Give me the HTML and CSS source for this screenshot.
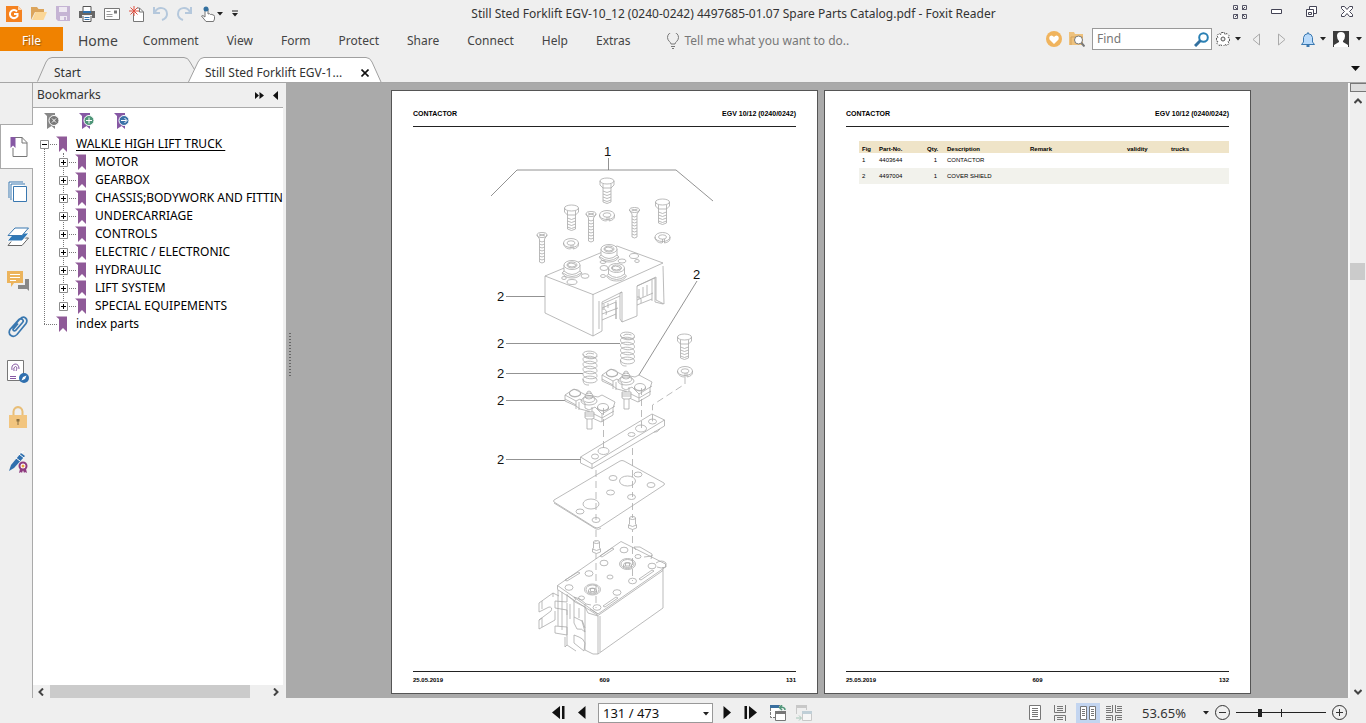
FILE: index.html
```html
<!DOCTYPE html>
<html lang="en">
<head>
<meta charset="utf-8">
<title>Still Sted Forklift EGV-10_12 (0240-0242) 4497685-01.07 Spare Parts Catalog.pdf - Foxit Reader</title>
<link rel="stylesheet" href="styles.css">
</head>
<body>
<svg class="defs" aria-hidden="true">
  <defs>
    <symbol id="mark" viewBox="0 0 12 16"><path d="M0 .5h11V16l-4-4-4 4V3z" fill="currentColor"/></symbol>
    <symbol id="plus" viewBox="0 0 9 9"><path d="M.5.5h8v8h-8z" fill="#fff" stroke="#8c8c8c"/><path d="M2 4.500h5M4.500 2v5" stroke="#000"/></symbol>
    <symbol id="minus" viewBox="0 0 9 9"><path d="M.5.5h8v8h-8z" fill="#fff" stroke="#8c8c8c"/><path d="M2 4.500h5" stroke="#000"/></symbol>
    <symbol id="caret" viewBox="0 0 6 4"><path d="M0 0h6L3 3.500z" fill="#222"/></symbol>
    <g id="bolt"><path d="M-7-1v4l3 3h8l3-3v-4M-4 2v4M4 2v4"/><ellipse cy="-1" rx="7" ry="3"/><path d="M-4 6v14q4 3 8 0V6M-4 9q4 3 8 0M-4 12q4 3 8 0M-4 15q4 3 8 0M-4 18q4 3 8 0"/></g>
    <g id="washer"><ellipse rx="7.500" ry="4.500"/><ellipse rx="4" ry="2.200"/><path d="M-7.500 0v1.500q2 4.500 7 4.500M2 6q5.500-1 5.500-4.500V0M0 2v4M2 2v4"/></g>
    <g id="screw"><ellipse rx="5" ry="2.500"/><path d="M-3-1 3 1M3-1-3 1M-5 0l2.500 4M5 0 2.500 4M-2.500 4v23q2.500 2 5 0V4M-2.500 6q2.500 2 5 0M-2.500 9q2.500 2 5 0M-2.500 12q2.500 2 5 0M-2.500 15q2.500 2 5 0M-2.500 18q2.500 2 5 0M-2.500 21q2.500 2 5 0M-2.500 24q2.500 2 5 0"/></g>
    <g id="spring"><path d="M7 4C6-1-7-1-7 3s14 6 14 1M-4 4q1-3 8-1M-7 3c0 6 14 6 14 2M-7 8c0 6 14 6 14 2M-7 13c0 6 14 6 14 2M-7 18c0 6 14 6 14 2M-7 23c0 6 14 6 14 2M-7 28c0 5 14 5 14 1M-7 8c0-4 14-4 14 2M-7 13c0-4 14-4 14 2M-7 18c0-4 14-4 14 2M-7 23c0-4 14-4 14 2M-7 28c0-4 14-4 14 1M-7 28c0 6 3 6 6 6"/></g>
    <g id="bridge"><path fill="#fff" d="M-24-3-15-9l12 6 7 1 5 1 4-2 13 7-2 6v7l-12 7-13-6v-5l-8-2-4-3-11-5z"/><path d="M-24-3l11 6 4-2 5 4 0 5 4 2 6-3 7 7 13-8M-24 1l11 6M-13 3v8M13 16v8M-1 13l14 7 12-7M-10 4v8M3 9v9"/><ellipse cx="-14" cy="-5" rx="5.500" ry="3.500"/><path d="M-19.500-5v2q5 4 11 0v-2"/><ellipse cx="14" cy="9" rx="5.500" ry="3.500"/><path d="M8.500 9v2q5 4 11 0V9"/><ellipse cx="0" cy="3" rx="8" ry="4"/><ellipse cx="0" cy="1" rx="6" ry="3.500"/><ellipse cx="0" cy="-2" rx="4" ry="3"/><path d="M-2-4v-2l2-1 2 1v2"/><path fill="#fff" d="M-4 14v6l2 1v10h5V21l2-1v-6zM-4 16h9M-4 18h9M-2 21h5"/></g>
    <g id="socket"><path fill="#fff" d="M-8-3v6l-2 2q3 5 10 5t10-5L8 3v-6"/><ellipse cy="-3" rx="8" ry="4.500" fill="#fff"/><ellipse cy="-3" rx="5" ry="3"/><path d="M-8 3q8 7 16 0M-9 5q9 7 18 0M-4-4l3-1 4 1 1 2-4 1-4-1z"/></g>
    <g id="plug"><path fill="#fff" d="M-3-4v6l-1 1v3q4 3 8 0V3L3 2v-6"/><ellipse cy="-4" rx="3" ry="1.500"/><path d="M-4 3q4 3 8 0"/></g>
    <g id="well"><ellipse rx="8" ry="5.500"/><ellipse rx="6.500" ry="4.500"/><ellipse cy="1" rx="4" ry="2.500"/><path d="M-4 1v2M4 1v2M-2-1h4v3h-4z"/></g>
  </defs>
</svg>

<div class="app">
  <header class="titlebar">
    <div class="quick">
      <button aria-label="Foxit"><svg width="16" height="16" viewBox="0 0 16 16"><path d="M0 0h12l4 4v12H0z" fill="#f58220"/><path d="M12 0v4h4" fill="#fcd5b0"/><path d="M11 5.500A4 4 0 1 0 11.500 10V8H8" fill="none" stroke="#fff" stroke-width="2"/></svg></button>
      <button aria-label="Open"><svg width="16" height="16" viewBox="0 0 16 16"><path d="M0 14V1h6l1.500 2H13v3H4z" fill="#dca55c"/><path d="M1 14 4.500 6H16l-3.500 8z" fill="#fbd798"/></svg></button>
      <button aria-label="Save"><svg width="14" height="15" viewBox="0 0 14 15"><path d="M0 0h14v15H2l-2-2z" fill="#c5b4d4"/><path d="M3 1h8v5H3zM4 10h7v4H4z" fill="#eee9f2"/><path d="M8 11h2v3H8z" fill="#c5b4d4"/></svg></button>
      <button aria-label="Print"><svg width="16" height="16" viewBox="0 0 16 16"><path d="M4 5V.5h8V5M4 10v5.500h8V10" fill="#fff" stroke="#555"/><path d="M0 5h16v7h-3V9H3v3H0z" fill="#666"/><path d="M4 5h8v2H4z" fill="#2f72ae"/><path d="M5.500 11.500h5M5.500 13.500h5" stroke="#2f72ae"/></svg></button>
      <button aria-label="E-mail"><svg width="16" height="12" viewBox="0 0 16 12"><path d="M.5.5h15v11H.5z" fill="#fff" stroke="#777"/><path d="M2.500 3.500h4M2.500 6.500h6M2.500 8.500h6" stroke="#999"/><path d="M10 2.500h3v3h-3z" fill="#777"/></svg></button>
      <button aria-label="New"><svg width="15" height="16" viewBox="0 0 15 16"><path d="M4.500 7v8.500h10V6l-4-4H8" fill="#fff" stroke="#777"/><path d="M10.500 2v4h4" fill="none" stroke="#777"/><path d="M5 0v10M0 5h10M1.500 1.500l7 7M8.500 1.500l-7 7" stroke="#e05040"/></svg></button>
      <button aria-label="Undo"><svg width="15" height="15" viewBox="0 0 15 15"><path d="M2 6C5 0 14 1 14 8c0 3-2 5-5 6M1 1v6h6" fill="none" stroke="#b5c8dc" stroke-width="2"/></svg></button>
      <button aria-label="Redo"><svg width="15" height="15" viewBox="1 0 15 15"><path d="M14 6C11 0 2 1 2 8c0 3 2 5 5 6M15 1v6H9" fill="none" stroke="#b5c8dc" stroke-width="2"/></svg></button>
      <button class="hand" aria-label="Hand tool"><svg width="14" height="16" viewBox="0 0 14 16"><path d="M4 11V3q1.500-2 3 0v5q1.500-1 2.500.5Q11 8 12 9q1.500 0 1.500 1.500V13l-1 2.500H5L.5 10q1-1.500 3.500 1z" fill="#fff" stroke="#777"/><circle cx="5" cy="3" r="2.500" fill="#33709f"/></svg><svg width="6" height="4"><use href="#caret"/></svg></button>
      <button aria-label="Customize"><svg width="6" height="7" viewBox="0 0 6 7"><path d="M0 1h6" stroke="#222"/><path d="M0 3h6L3 6.500z" fill="#222"/></svg></button>
    </div>
    <h1 class="title">Still Sted Forklift EGV-10_12 (0240-0242) 4497685-01.07 Spare Parts Catalog.pdf - Foxit Reader</h1>
    <div class="winctl">
      <button aria-label="Full screen"><svg width="14" height="14" viewBox="0 0 14 14" fill="none" stroke="#556"><path d="M.5 4.500v-4h4v4zM9.500.5h4v4h-4zM.5 9.500h4v4h-4zM9.500 9.500h4v4h-4zM2 2l3 3M12 2 9 5M2 12l3-3M12 12 9 9"/></svg></button>
      <button aria-label="Minimize"><svg width="11" height="5" viewBox="0 0 11 5"><path d="M.5.5h10v4H.5z" fill="#fff" stroke="#445"/></svg></button>
      <button aria-label="Restore"><svg width="11" height="11" viewBox="0 0 11 11" fill="#fff" stroke="#445"><path d="M3.500.5h7v7h-7z"/><path d="M.5 3.500h7v7h-7z"/><path d="M2.500 6.500h3v2h-3z"/></svg></button>
      <button aria-label="Close"><svg width="12" height="11" viewBox="0 0 12 11"><path d="M.5.500h3L6 3.500 8.500.5h3v2L8.500 5.500l3 3v2h-3L6 7.500l-2.500 3h-3v-2l3-3-3-3z" fill="#fff" stroke="#445"/></svg></button>
    </div>
  </header>

  <nav class="menubar">
    <button class="file">File</button>
    <div class="menus">
      <button class="home">Home</button><button>Comment</button><button>View</button><button>Form</button><button>Protect</button><button>Share</button><button>Connect</button><button>Help</button><button>Extras</button>
    </div>
    <button class="tell"><svg width="12" height="16" viewBox="0 0 12 16" fill="none" stroke="#777"><path d="M4 11c0-2-3.500-3-3.500-6.500a5 5 0 0 1 11 0C11.500 8 8 9 8 11zM4 13.500h4M5 15.500h2"/></svg>Tell me what you want to do..</button>
    <div class="tools">
      <button aria-label="Favourite"><svg width="16" height="16" viewBox="0 0 16 16"><circle cx="8" cy="8" r="8" fill="#f0b45e"/><path d="M8 13 3.500 8.500Q2.500 5 5.500 4.500 7 4.500 8 6q1-1.500 2.500-1.500 3 .5 2 4z" fill="#fff"/></svg></button>
      <button aria-label="Find in folder"><svg width="16" height="16" viewBox="0 0 16 16"><path d="M0 14V1h5l1 2h8v11z" fill="#eec27e"/><path d="M2 14V6h12" fill="none" stroke="#d5a35b"/><circle cx="9.500" cy="9" r="4" fill="#fff" stroke="#777"/><path d="m12.500 12 3 3.500" stroke="#777" stroke-width="2"/></svg></button>
      <label class="find"><input type="text" placeholder="Find" aria-label="Find"><svg width="15" height="15" viewBox="0 0 15 15"><circle cx="9.500" cy="5.500" r="4.300" fill="none" stroke="#2a80b4" stroke-width="2"/><path d="M6.500 8.500 1 14" stroke="#33709f" stroke-width="3"/></svg></label>
      <button class="pair" aria-label="Settings"><svg width="14" height="14" viewBox="0 0 14 14"><path d="M5.500.5h3l.5 2 2-1 2 2-1 2 1.500.500v3l-1.500.5 1 2-2 2-2-1-.5 1.500h-3L5 12.500l-2 1-2-2 1-2L.5 9V6L2 5.500l-1-2 2-2 2 1z" fill="#fff" stroke="#555" stroke-dasharray="2 1"/><circle cx="7" cy="7" r="2" fill="#efefef" stroke="#555"/></svg><svg width="6" height="4"><use href="#caret"/></svg></button>
      <button class="nav first" aria-label="Previous"><svg width="8" height="13" viewBox="0 0 8 13"><path d="M7.500 1v11L1 6.500z" fill="none" stroke="#aaa"/></svg></button>
      <button class="nav" aria-label="Next"><svg width="8" height="13" viewBox="0 0 8 13"><path d="M.5 1v11L7 6.500z" fill="none" stroke="#aaa"/></svg></button>
      <button class="pair" aria-label="Notifications"><svg width="14" height="15" viewBox="0 0 14 15"><path d="M.5 12.500 2.500 10V5.500Q3 2 7 1.500q4 .5 4.500 4V10l2 2.500z" fill="#b9dafa" stroke="#3a78b0"/><path d="M5.500 13h3v2h-3zM6.500 0h1v2h-1z" fill="#3a78b0"/></svg><svg width="6" height="4"><use href="#caret"/></svg></button>
      <button class="pair user" aria-label="Account"><svg width="16" height="16" viewBox="0 0 16 16"><path d="M0 0h16v16H0z" fill="#3c3c3c"/><path d="M4 5q0-4 4-4t4 4q0 3-2 5v1l5 3v2H1v-2l5-3v-1Q4 8 4 5z" fill="#fff"/></svg><svg width="6" height="4"><use href="#caret"/></svg></button>
    </div>
  </nav>

  <div class="tabs">
    <button class="tab start"><svg viewBox="0 0 160 25" width="160" height="25" aria-hidden="true"><path d="M.5 24.500 9 5Q11 .5 15 .5H147Q151 .5 153 5L159.500 16" fill="#efefef" stroke="#a0a0a0"/></svg><span>Start</span></button>
    <div class="tab active"><svg viewBox="0 0 194 25" width="194" height="25" aria-hidden="true"><path d="M.5 25 10 5Q12 .5 16 .5H178Q182 .5 184 5L193 25" fill="#fff" stroke="#a0a0a0"/></svg><span>Still Sted Forklift EGV-1...</span><button aria-label="Close tab"><svg width="8" height="8" viewBox="0 0 8 8"><path d="m.5.500 7 7M7.500.500l-7 7" stroke="#111" stroke-width="1.600"/></svg></button></div>
    <button class="more" aria-label="Tab list"><svg width="9" height="5" viewBox="0 0 9 5"><path d="M0 0h9L4.500 5z" fill="#111"/></svg></button>
  </div>

  <div class="main">
    <nav class="rail">
      <button class="on" aria-label="Bookmarks"><svg width="18" height="22" viewBox="0 0 18 22"><path d="M3 12v8.500h14V6.500l-5-5H5" fill="none" stroke="#777"/><path d="M12 1v6h5" fill="none" stroke="#777"/><path d="M0 1h5.500v11L3 9.500.500 12V1z" fill="#8658a4"/></svg></button>
      <button aria-label="Pages"><svg width="20" height="22" viewBox="0 0 20 22" fill="#fff" stroke="#3a78b0"><path d="M1 17V1h14"/><path d="M3 19V3h14"/><path d="M5.500 5.500h13v15h-13z"/></svg></button>
      <button aria-label="Layers"><svg width="22" height="20" viewBox="0 0 22 20"><path d="M1 18.500h14L21.500 11H7z" fill="#fff" stroke="#666"/><path d="M0 14h15l7-8H7z" fill="#2f78b7" stroke="#fff"/><path d="M1 8.500h14L21.500 1H8z" fill="#fff" stroke="#3a78b0"/></svg></button>
      <button aria-label="Comments"><svg width="22" height="21" viewBox="0 0 22 21"><path d="M14 8h8v12l-2-2h-9v-4h7V8z" fill="#888"/><path d="M0 0h16v12H7l-3 4v-4H0z" fill="#ecb45c"/><path d="M3 3.500h10M3 6.500h10M3 9.500h6" stroke="#fff"/></svg></button>
      <button aria-label="Attachments"><svg width="20" height="22" viewBox="0 0 20 22"><path d="m4 12 8-9q3-3 5.500-1t.5 5.500l-9 11q-3 3-6 1t-1-6l9-10q2-1.500 3.500 0t0 3l-7 8q-2 1-2.500-1l5-6" fill="none" stroke="#3a78b0" stroke-width="1.700"/></svg></button>
      <button aria-label="Signatures"><svg width="22" height="23" viewBox="0 0 22 23"><path d="M.5.500h16v20H.5z" fill="#fff" stroke="#777"/><path d="M5 10q-1-5 3-6 4 0 4 5M7 11q-1-4 1.500-4.500Q11 7 9 11M3 16.500h6M3 18.500h6" fill="none" stroke="#8658a4"/><circle cx="17" cy="18" r="5" fill="#2f6fae"/><path d="m14.500 20.500 1.500-3.500 3.500-1.500-1.500 3.500z" fill="#fff"/></svg></button>
      <button aria-label="Security"><svg width="18" height="22" viewBox="0 0 18 22"><path d="M4.500 10V5.500q.5-4 4.500-4.500 4 .5 4.500 4.500V10" fill="none" stroke="#e8be78" stroke-width="2"/><path d="M0 9h18v13H0z" fill="#f2c57f"/><path d="M7.500 13h3v2.500h-1V19h-1v-3.500h-1z" fill="#8b7041"/></svg></button>
      <button aria-label="Sign"><svg width="20" height="22" viewBox="0 0 20 22"><path d="m1 20 2-6L13 2l4 3L6 17z" fill="#2f6fae"/><path d="m11 3 5 4M8 7l4 3M13 2l3-2" stroke="#fff"/><circle cx="15" cy="15" r="3.500" fill="#fff" stroke="#8e3b7f" stroke-width="2"/><circle cx="15" cy="15" r="1.500" fill="#e8a33d"/><path d="m12 18-1 4 2-1 1 1 1-3 1 3 1-1 2 1-1-4z" fill="#8e3b7f"/></svg></button>
    </nav>

    <aside class="panel">
      <div class="panel-head"><h2>Bookmarks</h2><button aria-label="Expand"><svg width="9" height="7" viewBox="0 0 9 7"><path d="M0 0l4 3.500L0 7zM4.500 0 9 3.500 4.500 7z" fill="#111"/></svg></button><button aria-label="Collapse"><svg width="5" height="9" viewBox="0 0 5 9"><path d="M5 0v9L0 4.500z" fill="#111"/></svg></button></div>
      <div class="panel-body">
        <div class="panel-tools">
          <button aria-label="Delete bookmark"><svg width="16" height="17" viewBox="0 0 16 17"><path d="M0 0h11v16l-3.500-3L3 16V3z" fill="#888"/><circle cx="10" cy="7.500" r="5" fill="#777" stroke="#fff"/><path d="m8 5.500 4 4M12 5.500l-4 4" stroke="#fff"/></svg></button>
          <button aria-label="Add bookmark"><svg width="16" height="17" viewBox="0 0 16 17"><path d="M0 0h11v16l-3.500-3L3 16V3z" fill="#8658a4"/><circle cx="10" cy="7.500" r="5" fill="#4f9679" stroke="#fff"/><path d="M7 7.500h6M10 4.500v6" stroke="#fff"/></svg></button>
          <button aria-label="Go to bookmark"><svg width="16" height="17" viewBox="0 0 16 17"><path d="M0 0h11v16l-3.500-3L3 16V3z" fill="#8658a4"/><circle cx="10" cy="7.500" r="5" fill="#3b72a8" stroke="#fff"/><path d="M7 7.500h5.500M10.500 5l2.500 2.500-2.500 2.500" fill="none" stroke="#fff"/></svg></button>
        </div>
        <ul class="tree">
          <li><div class="row"><svg class="box"><use href="#minus"/></svg><svg class="bm"><use href="#mark"/></svg><a class="current" href="#p1">WALKLE HIGH LIFT TRUCK&nbsp;</a></div>
            <ul>
              <li class="row"><svg class="box"><use href="#plus"/></svg><svg class="bm"><use href="#mark"/></svg><a href="#p1">MOTOR</a></li>
              <li class="row"><svg class="box"><use href="#plus"/></svg><svg class="bm"><use href="#mark"/></svg><a href="#p1">GEARBOX</a></li>
              <li class="row"><svg class="box"><use href="#plus"/></svg><svg class="bm"><use href="#mark"/></svg><a href="#p1">CHASSIS;BODYWORK AND FITTIN</a></li>
              <li class="row"><svg class="box"><use href="#plus"/></svg><svg class="bm"><use href="#mark"/></svg><a href="#p1">UNDERCARRIAGE</a></li>
              <li class="row"><svg class="box"><use href="#plus"/></svg><svg class="bm"><use href="#mark"/></svg><a href="#p1">CONTROLS</a></li>
              <li class="row"><svg class="box"><use href="#plus"/></svg><svg class="bm"><use href="#mark"/></svg><a href="#p1">ELECTRIC / ELECTRONIC</a></li>
              <li class="row"><svg class="box"><use href="#plus"/></svg><svg class="bm"><use href="#mark"/></svg><a href="#p1">HYDRAULIC</a></li>
              <li class="row"><svg class="box"><use href="#plus"/></svg><svg class="bm"><use href="#mark"/></svg><a href="#p1">LIFT SYSTEM</a></li>
              <li class="row"><svg class="box"><use href="#plus"/></svg><svg class="bm"><use href="#mark"/></svg><a href="#p1">SPECIAL EQUIPEMENTS</a></li>
            </ul>
          </li>
          <li class="row leaf"><span class="box"></span><svg class="bm"><use href="#mark"/></svg><a href="#p2">index parts</a></li>
        </ul>
      </div>
      <div class="hscroll"><button aria-label="Scroll left"><svg width="6" height="8" viewBox="0 0 6 8"><path d="M5 .5 1.500 4 5 7.500" fill="none" stroke="#444" stroke-width="2"/></svg></button><div class="track"><div class="thumb"></div></div><button aria-label="Scroll right"><svg width="6" height="8" viewBox="0 0 6 8"><path d="M1 .5 4.500 4 1 7.500" fill="none" stroke="#444" stroke-width="2"/></svg></button></div>
    </aside>
    <div class="splitter"><i></i></div>

    <main class="doc">
      <section class="page" id="p1">
        <header class="page-head"><span>CONTACTOR</span><span>EGV 10/12 (0240/0242)</span></header>
        <svg class="drawing" viewBox="413 128 383 542" role="img" aria-label="Exploded view of contactor">
          <g fill="none" stroke="#777" stroke-width=".8">
            <path d="M491 196l26-26h159l37 31M608.500 158v12M506 296.500h39M506 343.500h114M506 373.500h77M506 400.500h59M506 459.500h75M697 281l-63 102"/>
          </g>
          <g fill="none" stroke="#aaa" stroke-width=".8">
            <use href="#bolt" x="607" y="182"/><use href="#bolt" x="571.500" y="209"/><use href="#bolt" x="662.500" y="203"/><use href="#bolt" x="684.500" y="338"/>
            <use href="#washer" x="607" y="215"/><use href="#washer" x="571" y="243"/><use href="#washer" x="662.500" y="237"/><use href="#washer" x="685" y="371"/>
            <use href="#screw" x="542" y="235"/><use href="#screw" x="591" y="214"/><use href="#screw" x="634.500" y="210"/>
            <path d="M545 276l72-30 46 17-70 31.500zM545 276v37l48 23v-42M593 336l9-5v-29l20-10v30l15-6v-30l19-9v23l8 4-1-38M622 292l-2 1v26l2 3M599 301v28M602 304l18-8M602 308l14-6v17M604 304v5M608 303v5M602 314l16-6M602 320l14-6M616 300v19M637 286l18-8M655 278v24l8 2M639 289v10M643 287v10M647 285v10M637 300l16-7M652 280v21M637 305l15-6M637 297q5-1 4 6M602 309q6 0 4 6"/>
            <use href="#socket" x="572" y="268"/><use href="#socket" x="609" y="252"/><use href="#socket" x="616.500" y="271"/>
            <ellipse cx="634" cy="256" rx="4.500" ry="2.500"/><ellipse cx="622" cy="261" rx="4" ry="2"/><ellipse cx="604" cy="268" rx="4" ry="2.500"/><ellipse cx="585" cy="276" rx="4" ry="2.300"/><ellipse cx="572" cy="282" rx="5" ry="2.500"/><ellipse cx="637" cy="261" rx="2.300" ry="1.500"/><ellipse cx="564" cy="278" rx="2.300" ry="1.500"/><ellipse cx="603" cy="276" rx="2.500" ry="1.500"/><ellipse cx="603" cy="262" rx="3" ry="1.500"/>
            <use href="#spring" x="627.500" y="332"/><use href="#spring" x="590" y="351"/>
            <use href="#bridge" x="626" y="378"/><use href="#bridge" x="589" y="398"/>
            <path d="M580.500 457 652 414l12.500 6L592 464zM580.500 457v6l11.500 5.500V464M592 468.500l72.500-42.500v-6M654 432q3 1 6-3"/>
            <ellipse cx="595" cy="456.500" rx="3.500" ry="2.500"/><ellipse cx="603.500" cy="451" rx="5.500" ry="3.500"/><ellipse cx="631.500" cy="434.500" rx="3.500" ry="2"/><ellipse cx="641" cy="428.500" rx="5.500" ry="3.500"/><ellipse cx="652.500" cy="421.500" rx="4" ry="2.500"/>
            <path stroke-dasharray="7 4" d="M603.500 408v44M641.500 388v41M685 377v7l-32.500 21v17M596 470v50M596 530v78M632.500 448v49M632.500 503v78"/>
            <path d="M554 500l66-39q2-1 4 0l40 22q1 1 0 2l-64 42q-3 2-6 0l-40-25q-1-1 0-2zM554 503l42 26q3 1 5-1"/>
            <ellipse cx="627.500" cy="481" rx="8" ry="5"/><ellipse cx="591" cy="504" rx="8" ry="5"/><g><ellipse cx="613" cy="478" rx="4" ry="2.500"/><ellipse cx="638" cy="474.500" rx="4" ry="2.500"/><ellipse cx="651" cy="485" rx="4" ry="2.500"/><ellipse cx="610.500" cy="492.500" rx="4" ry="2.500"/><ellipse cx="631.500" cy="497" rx="4" ry="2.500"/><ellipse cx="580" cy="511.500" rx="4" ry="2.500"/><ellipse cx="596" cy="520" rx="4" ry="2.500"/></g>
            <use href="#plug" x="632.500" y="522"/><use href="#plug" x="596.500" y="546"/>
            <path d="M557.500 585.500 621 541.500l44.500 22.500v3L598 614zM557.500 585.500v4l40.500 26 65-45M598 616v38l65-46v-41M600 616v36"/>
            <use href="#well" x="627.500" y="564"/><use href="#well" x="592.500" y="589.500"/>
            <g><ellipse cx="624" cy="550" rx="4" ry="2.800"/><ellipse cx="604" cy="563" rx="4" ry="2.800"/><ellipse cx="589" cy="573.500" rx="4" ry="2.800"/><ellipse cx="569" cy="587.500" rx="4" ry="2.800"/><ellipse cx="652" cy="566" rx="4" ry="2.800"/><ellipse cx="632.500" cy="581" rx="4" ry="2.800"/><ellipse cx="617" cy="592.500" rx="4" ry="2.800"/><ellipse cx="597" cy="607.500" rx="4" ry="2.800"/><ellipse cx="638" cy="556.500" rx="3" ry="2"/><ellipse cx="610" cy="577" rx="3" ry="2"/><ellipse cx="581.500" cy="598" rx="3" ry="2"/></g>
            <path d="M565 580l13-8 2 1-13 8zM600 556l12-8 2 1-12 8zM639 579l13-9 2 1-13 9zM603 606l13-9 2 1-13 9zM644 557l8-1v-2l-12-7h-6l2 3M652 555l-1 4M656 563q6-4 10 0v4q-5 2-9 0"/>
            <path d="M539 603l14-10 6 3M539 603v9l10-5q4 0 2 4l-12 9v9l16-9v-9M542 601v8M542 618v9M553 593v4M539 620l3-2M558 590v36M562 592v38M567 594v8l-12-1v7l12 2v5M555 626v7l12 2v-8l-12-1M567 603v42l9 6M567 645l-2 2v-10M574 600v17l8 4 3 11q-3-4-8-3l-3-6v-6M574 635v8l10 8 1-8q-2-5-6-6l-5-2M576 600l-2-3 6 2 6 5 5 1M585 604v46l8 4 5 0M582 620l3 8M567 595l8 7 10 5 3 6 10 3M579 608v10M570 604v15M590 609l8 5"/>
          </g>
          <g class="callouts"><text x="604" y="156">1</text><text x="693" y="279">2</text><text x="497" y="301">2</text><text x="497" y="348">2</text><text x="497" y="378">2</text><text x="497" y="405">2</text><text x="497" y="464">2</text></g>
        </svg>
        <footer class="page-foot"><span>25.05.2019</span><span>609</span><span>131</span></footer>
      </section>
      <section class="page" id="p2">
        <header class="page-head"><span>CONTACTOR</span><span>EGV 10/12 (0240/0242)</span></header>
        <div class="sheet">
          <table>
            <colgroup><col class="c-fig"><col class="c-part"><col class="c-qty"><col class="c-desc"><col class="c-rem"><col class="c-val"><col></colgroup>
            <thead><tr><th>Fig</th><th>Part-No.</th><th>Qty.</th><th>Description</th><th>Remark</th><th>validity</th><th>trucks</th></tr></thead>
            <tbody><tr><td>1</td><td>4403644</td><td class="q">1</td><td>CONTACTOR</td><td></td><td></td><td></td></tr>
            <tr class="alt"><td>2</td><td>4497004</td><td class="q">1</td><td>COVER SHIELD</td><td></td><td></td><td></td></tr></tbody>
          </table>
        </div>
        <footer class="page-foot"><span>25.05.2019</span><span>609</span><span>132</span></footer>
      </section>
    </main>
    <div class="vscroll"><div class="split-box"></div><button aria-label="Scroll up"><svg width="8" height="6" viewBox="0 0 8 6"><path d="M.5 5 4 1.500 7.500 5" fill="none" stroke="#444" stroke-width="2"/></svg></button><div class="track"><div class="thumb"></div></div><button aria-label="Scroll down"><svg width="8" height="6" viewBox="0 0 8 6"><path d="M.5 1 4 4.500 7.500 1" fill="none" stroke="#444" stroke-width="2"/></svg></button></div>
  </div>

  <footer class="status">
    <div class="pager">
      <button aria-label="First page"><svg width="13" height="13" viewBox="0 0 13 13" fill="#111"><path d="M8 0v13L0 6.500zM10 0h2.500v13H10z"/></svg></button>
      <button aria-label="Previous page"><svg width="8" height="13" viewBox="0 0 8 13"><path d="M7.500 0v13L0 6.500z" fill="#111"/></svg></button>
      <div class="pick"><select aria-label="Page"><option>131 / 473</option></select><svg width="6" height="4"><use href="#caret"/></svg></div>
      <button aria-label="Next page"><svg width="8" height="13" viewBox="0 0 8 13"><path d="M.5 0v13L8 6.500z" fill="#111"/></svg></button>
      <button aria-label="Last page"><svg width="13" height="13" viewBox="0 0 13 13" fill="#111"><path d="M.5 0H3v13H.5zM5 0v13l8-6.500z"/></svg></button>
      <button aria-label="Previous view"><svg width="17" height="16" viewBox="0 0 17 16"><path d="M6 12.500H.5V.5H10" fill="#fff" stroke="#777" stroke-dasharray="3 1"/><path d="M0 0h9v3H0z" fill="#3a6f9f"/><path d="M5.500 6.500h10v9h-10z" fill="#fff" stroke="#777"/><path d="M5 6h11v3H5z" fill="#777"/><path d="M15 5q0-3-5-3M12 0 9.500 2.500 12 5" fill="none" stroke="#4f9679" stroke-width="1.500"/></svg></button>
      <button class="dim" aria-label="Next view"><svg width="17" height="16" viewBox="0 0 17 16"><path d="M.5 9V.5h10V5" fill="none" stroke="#999"/><path d="M0 0h11v3H0z" fill="#999"/><path d="M6.500 6.500h9v9h-9z" fill="#fff" stroke="#999"/><path d="M6 6h10v3H6z" fill="#8ab"/><path d="M0 13h5M3 10.500 5.500 13 3 15.500" fill="none" stroke="#4f9679"/></svg></button>
    </div>
    <div class="view">
      <button class="single" aria-label="Single page"><svg width="12" height="15" viewBox="0 0 12 15" fill="#fff" stroke="#777"><path d="M.5.500h11v14H.5zM3 3.500h6M3 5.500h6M3 7.500h6M3 9.500h6M3 11.500h6"/></svg></button>
      <button class="cont" aria-label="Continuous"><svg width="12" height="16" viewBox="0 0 12 16" fill="none" stroke="#777"><path d="M.5 0v7.500h11V0M.5 16v-5.500h11V16M3 1.500h6M3 3.500h6M3 5.500h6M3 12.500h6M3 14.500h6"/></svg></button>
      <button class="sel" aria-label="Facing"><svg width="16" height="14" viewBox="0 0 16 14" fill="#fff" stroke="#777"><path d="M.5.500h6v13h-6zM9.500.500h6v13h-6zM2 3.500h3M2 5.500h3M2 7.500h3M2 9.500h3M11 3.500h3M11 5.500h3M11 7.500h3M11 9.500h3"/></svg></button>
      <button aria-label="Continuous facing"><svg width="16" height="16" viewBox="0 0 16 16" fill="none" stroke="#777"><path d="M6.500 0v7.500H0M9.500 0v7.500H16M0 10.500h6.500V16M16 10.500H9.500V16M0 1.500h5M0 3.500h5M0 5.500h5M11 1.500h5M11 3.500h5M11 5.500h5M0 12.500h5M0 14.500h5M11 12.500h5M11 14.500h5"/></svg></button>
      <button class="zoom">53.65%<svg width="6" height="4"><use href="#caret"/></svg></button>
      <button aria-label="Zoom out"><svg width="15" height="15" viewBox="0 0 15 15" fill="none" stroke="#333"><circle cx="7.500" cy="7.500" r="7"/><path d="M4 7.500h7"/></svg></button>
      <input type="range" min="0" max="100" value="25" aria-label="Zoom">
      <button aria-label="Zoom in"><svg width="15" height="15" viewBox="0 0 15 15" fill="none" stroke="#333"><circle cx="7.500" cy="7.500" r="7"/><path d="M4 7.500h7M7.500 4v7"/></svg></button>
    </div>
  </footer>
</div>
</body>
</html>
```
FILE: styles.css
```css
* { box-sizing: border-box; }
body { margin: 0; background: #efefef; color: #444; font: 12px/16px "Noto Sans", "Open Sans", sans-serif; }
button { appearance: none; border: 0; padding: 0; margin: 0; background: none; color: inherit; font: inherit; display: flex; align-items: center; justify-content: center; white-space: nowrap; }
svg { display: block; flex: none; }
h1, h2 { margin: 0; font: inherit; }
ul { list-style: none; margin: 0; padding: 0; }
.defs { position: absolute; width: 0; height: 0; }
.app { display: flex; flex-direction: column; height: 100vh; overflow: hidden; }

.titlebar { display: grid; grid-template-columns: 1fr auto 1fr; align-items: center; height: 27px; flex: none; padding: 0 13px 0 6px; }
.quick { display: flex; align-items: center; gap: 9px; }
.quick .hand { gap: 2px; }
.title { color: #333; white-space: nowrap; padding-left: 108px; font-size: 12px; }
.winctl { display: flex; align-items: center; justify-content: flex-end; gap: 24px; margin-top: -4px; }

.menubar { display: flex; align-items: center; height: 24px; flex: none; padding-right: 4px; }
.file { width: 63px; height: 24px; padding-top: 4px; background: #f08200; color: #fff; text-shadow: 1px 1px 1px #9a5a10; }
.menus { display: flex; align-items: center; gap: 28px; margin: 4px 0 0 15px; }
.menus .home { font-size: 14px; margin-right: -3px; }
.tell { gap: 6px; margin: 4px 0 0 36px; color: #777; }
.tools { display: flex; align-items: center; gap: 7px; margin-left: auto; }
.find { display: flex; align-items: center; width: 120px; height: 22px; border: 1px solid #999; background: #fff; padding: 0 2px 0 4px; margin-right: -3px; }
.find input { flex: 1; min-width: 0; border: 0; outline: 0; padding: 0; background: none; color: #666; font: inherit; }
.find input::placeholder { color: #777; opacity: 1; }
.pair { gap: 5px; }
.nav { margin: 0 8px 0 5px; }
.nav.first { margin: 0 6px 0 4px; }
.user { gap: 7px; }

.tabs { display: flex; align-items: flex-end; height: 32px; flex: none; padding: 0 6px 0 37px; border-bottom: 1px solid #a6a6a6; }
.tab { position: relative; display: flex; align-items: center; height: 25px; color: #333; }
.tab > svg { position: absolute; left: 0; top: 0; }
.tab > span { position: relative; padding-top: 6px; }
.start { width: 151px; justify-content: flex-start; padding-left: 17px; }
.active { width: 194px; padding-left: 17px; margin-bottom: -1px; height: 26px; }
.active > button { position: relative; margin: 6px 0 0 19px; }
.more { margin: 0 0 11px auto; }

.main { display: flex; flex: 1; min-height: 0; }
.rail { width: 33px; flex: none; display: flex; flex-direction: column; padding-top: 41px; border-right: 1px solid #aaa; }
.rail button { height: 45px; width: 33px; padding-left: 3px; }
.rail .on { background: #fff; border: 1px solid #aaa; border-right: 0; }
.panel { width: 253px; flex: none; display: flex; flex-direction: column; }
.panel-head { display: flex; align-items: center; gap: 9px; height: 24px; padding: 0 8px 0 4px; color: #333; }
.panel-head h2 { flex: 1; }
.panel-body { flex: 1; min-height: 0; background: #fff; border-top: 1px solid #aaa; margin-right: 3px; overflow: hidden; color: #000; }
.panel-tools { display: flex; align-items: flex-start; gap: 19px; padding: 5px 0 0 11px; height: 27px; }
.tree a { color: inherit; text-decoration: none; white-space: nowrap; }
.tree .current { text-decoration: underline; text-underline-offset: 2px; }
.tree { padding-left: 7px; position: relative; }
.tree ul { padding-left: 19px; position: relative; }
.tree > li:first-child::before { content: ""; position: absolute; left: 11px; top: 14px; height: 175px; border-left: 1px dotted #777; }
.tree ul::before { content: ""; position: absolute; left: 23px; top: 0; height: 154px; border-left: 1px dotted #777; }
.row { display: flex; align-items: center; height: 18px; position: relative; }
.row::before { content: ""; position: absolute; left: 4px; width: 13px; border-top: 1px dotted #777; }
.box { width: 9px; height: 9px; margin-right: 7px; position: relative; flex: none; }
.bm { width: 12px; height: 16px; margin-right: 8px; color: #8f5a98; }
.hscroll { display: flex; align-items: center; height: 13px; padding: 0 7px 0 5px; }
.hscroll .track { flex: 1; margin: 0 23px 0 6px; }
.hscroll .thumb { height: 13px; background: #cbcbcb; }
.splitter { width: 8px; flex: none; background: #aaa; display: flex; align-items: center; padding: 0 3px 73px; }
.splitter i { width: 4px; height: 44px; background: radial-gradient(circle, #666 30%, transparent 40%) 0 0 / 2px 3px; }
.doc { flex: 1; min-width: 0; background: #aaa; display: flex; justify-content: center; gap: 6px; padding: 7px 0 4px; }
.page { height: 100%; aspect-ratio: 427 / 604; background: #fff; border: 1px solid #555; display: flex; flex-direction: column; padding: 0 21px; color: #000; font: bold 7px/9px "Liberation Sans", Arial, sans-serif; }
.page-head { display: flex; justify-content: space-between; align-items: center; height: 36px; padding-top: 9px; border-bottom: 1px solid #222; flex: none; }
.drawing { flex: 1; min-height: 0; width: 100%; }
.callouts { font: 13px "Liberation Sans", Arial, sans-serif; fill: #111; }
.page-foot { display: grid; grid-template-columns: 1fr auto 1fr; height: 22px; padding-top: 4px; border-top: 1px solid #222; font-size: 6px; flex: none; }
.page-foot span:last-child { text-align: right; }
.sheet { flex: 1; padding: 14px 0 0 13px; font-weight: normal; font-size: 6px; }
table { width: 100%; border-collapse: collapse; table-layout: fixed; line-height: 8px; }
th, td { padding: 0 0 0 3px; text-align: left; vertical-align: middle; }
th { background: #efe4c8; height: 12px; padding-top: 4px; }
td { height: 15px; padding-bottom: 2px; }
.alt td { background: #f2f2ec; height: 16px; padding-bottom: 0; }
td.q { text-align: center; }
.c-fig { width: 17px; } .c-part { width: 48px; } .c-qty { width: 20px; } .c-desc { width: 83px; } .c-rem { width: 97px; } .c-val { width: 44px; }
.vscroll { width: 18px; flex: none; display: flex; flex-direction: column; align-items: center; border-left: 2px solid #f8f8f8; padding-bottom: 3px; }
.split-box { width: 17px; height: 9px; border: 1px solid #777; background: #ddd; margin-bottom: 6px; }
.vscroll .track { flex: 1; width: 100%; display: flex; flex-direction: column; padding-right: 1px; }
.vscroll .track::before { content: ""; flex: 159; }
.vscroll .track::after { content: ""; flex: 408; }
.vscroll .thumb { height: 17px; background: #cbcbcb; }

.status { display: flex; align-items: center; height: 25px; flex: none; padding: 4px 19px 0 552px; }
.pager, .view { display: flex; align-items: center; }
.pager { gap: 13px; }
.pick { display: flex; align-items: center; position: relative; margin: 0 -3px 0 -1px; }
.pick select { appearance: none; width: 115px; height: 20px; border: 1px solid #999; border-radius: 0; background: #fff; color: #111; font: 13px/16px "Noto Sans", sans-serif; padding: 0 4px; }
.pick svg { position: absolute; right: 4px; top: 9px; }
.dim { opacity: .45; margin-left: -4px; }
.view { margin-left: auto; gap: 6px; }
.single { margin-right: 7px; }
.cont { margin-right: 4px; }
.sel { background: #c3d5f0; width: 24px; height: 20px; }
.zoom { font-size: 13px; gap: 17px; margin-left: 14px; color: #333; }
.view input { appearance: none; width: 90px; height: 15px; margin: 0; background: linear-gradient(#222, #222) 0 7px / 100% 1px no-repeat, linear-gradient(#222, #222) 50% 4px / 1px 8px no-repeat; }
.view input::-webkit-slider-thumb { appearance: none; width: 4px; height: 8px; background: #222; }
```
